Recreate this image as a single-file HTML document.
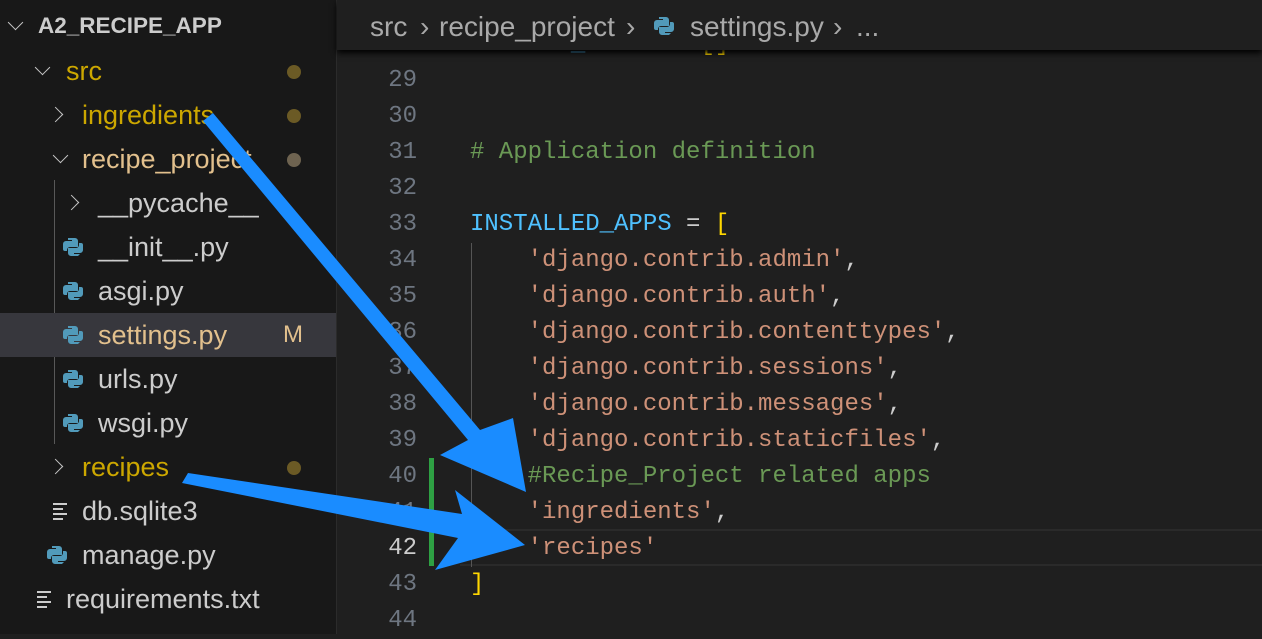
<!DOCTYPE html>
<html><head><meta charset="utf-8"><style>
*{margin:0;padding:0;box-sizing:border-box}
body{width:1262px;height:634px;overflow:hidden;background:#1f1f1f;position:relative;font-family:"Liberation Sans",sans-serif}
#side{position:absolute;left:0;top:0;width:337px;height:634px;background:#181818;border-right:1px solid #2b2b2b}
.r{position:absolute;left:0;width:336px;height:44px;line-height:44px;font-size:27px;color:#cccccc;white-space:nowrap}
.r span{position:absolute}
.chev{position:absolute;width:11px;height:11px;border-right:1.5px solid #c5c5c5;border-bottom:1.5px solid #c5c5c5}
.dn{transform:rotate(45deg)}
.rt{transform:rotate(-45deg)}
.dot{position:absolute;left:287px;top:16px;width:14px;height:14px;border-radius:50%;background:#6b5a25}
.py{position:absolute;top:11px}
.guide{position:absolute;left:54px;top:180px;width:1px;height:264px;background:#585858}
#hdr{position:absolute;left:337px;top:0;width:925px;height:50px;background:#1f1f1f;box-shadow:0 3px 6px #000;z-index:2;font-size:28px;color:#a9a9a9;line-height:54px}
.ln{position:absolute;left:337px;width:80px;text-align:right;font-family:"Liberation Mono",monospace;font-size:24px;color:#6e7681;height:36px;line-height:36px}
.cd{position:absolute;left:470px;font-family:"Liberation Mono",monospace;font-size:24px;height:36px;line-height:36px;white-space:pre;color:#cccccc}
.s{color:#ce9178}.c{color:#6a9955}.v{color:#4fc1ff}.b{color:#ffd700}
</style></head><body>
<div id="side">
<div class="r" style="top:4px"><i class="chev dn" style="left:10px;top:13px"></i><span style="left:38px;font-weight:bold;color:#cccccc;font-size:22.5px">A2_RECIPE_APP</span></div>
<div class="r" style="top:49px;color:#cca700"><i class="chev dn" style="left:37px;top:13px"></i><span style="left:66px">src</span><i class="dot"></i></div>
<div class="r" style="top:93px;color:#cca700"><i class="chev rt" style="left:50px;top:16px"></i><span style="left:82px">ingredients</span><i class="dot"></i></div>
<div class="r" style="top:137px;color:#e2c08d"><i class="chev dn" style="left:55px;top:13px"></i><span style="left:82px">recipe_project</span><i class="dot" style="background:#6e6350"></i></div>
<div class="guide"></div>
<div class="r" style="top:181px"><i class="chev rt" style="left:66px;top:16px"></i><span style="left:98px">__pycache__</span></div>
<div class="r" style="top:225px"><svg class="py" style="left:62px" width="22" height="22" viewBox="0 0 22 22"><path d="M6 2h7a3 3 0 013 3v6H8a3 3 0 00-3 3v1H3a2 2 0 01-2-2V8a3 3 0 013-3h6V4H6z" fill="#519aba"/><path d="M16 20H9a3 3 0 01-3-3v-5h8a3 3 0 003-3V7h2a2 2 0 012 2v5a3 3 0 01-3 3h-6v1h6z" fill="#519aba"/></svg><span style="left:98px">__init__.py</span></div>
<div class="r" style="top:269px"><svg class="py" style="left:62px" width="22" height="22" viewBox="0 0 22 22"><path d="M6 2h7a3 3 0 013 3v6H8a3 3 0 00-3 3v1H3a2 2 0 01-2-2V8a3 3 0 013-3h6V4H6z" fill="#519aba"/><path d="M16 20H9a3 3 0 01-3-3v-5h8a3 3 0 003-3V7h2a2 2 0 012 2v5a3 3 0 01-3 3h-6v1h6z" fill="#519aba"/></svg><span style="left:98px">asgi.py</span></div>
<div class="r" style="top:313px;background:#37373d;color:#e2c08d"><svg class="py" style="left:62px" width="22" height="22" viewBox="0 0 22 22"><path d="M6 2h7a3 3 0 013 3v6H8a3 3 0 00-3 3v1H3a2 2 0 01-2-2V8a3 3 0 013-3h6V4H6z" fill="#519aba"/><path d="M16 20H9a3 3 0 01-3-3v-5h8a3 3 0 003-3V7h2a2 2 0 012 2v5a3 3 0 01-3 3h-6v1h6z" fill="#519aba"/></svg><span style="left:98px">settings.py</span><span style="left:283px;font-size:24px">M</span></div>
<div class="r" style="top:357px"><svg class="py" style="left:62px" width="22" height="22" viewBox="0 0 22 22"><path d="M6 2h7a3 3 0 013 3v6H8a3 3 0 00-3 3v1H3a2 2 0 01-2-2V8a3 3 0 013-3h6V4H6z" fill="#519aba"/><path d="M16 20H9a3 3 0 01-3-3v-5h8a3 3 0 003-3V7h2a2 2 0 012 2v5a3 3 0 01-3 3h-6v1h6z" fill="#519aba"/></svg><span style="left:98px">urls.py</span></div>
<div class="r" style="top:401px"><svg class="py" style="left:62px" width="22" height="22" viewBox="0 0 22 22"><path d="M6 2h7a3 3 0 013 3v6H8a3 3 0 00-3 3v1H3a2 2 0 01-2-2V8a3 3 0 013-3h6V4H6z" fill="#519aba"/><path d="M16 20H9a3 3 0 01-3-3v-5h8a3 3 0 003-3V7h2a2 2 0 012 2v5a3 3 0 01-3 3h-6v1h6z" fill="#519aba"/></svg><span style="left:98px">wsgi.py</span></div>
<div class="r" style="top:445px;color:#cca700"><i class="chev rt" style="left:50px;top:16px"></i><span style="left:82px">recipes</span><i class="dot"></i></div>
<div class="r" style="top:489px"><svg style="position:absolute;left:52px;top:13px" width="18" height="18"><path d="M1 2h14M1 7h10M1 12h14M1 17h10" stroke="#ccc" stroke-width="2"/></svg><span style="left:82px">db.sqlite3</span></div>
<div class="r" style="top:533px"><svg class="py" style="left:46px" width="22" height="22" viewBox="0 0 22 22"><path d="M6 2h7a3 3 0 013 3v6H8a3 3 0 00-3 3v1H3a2 2 0 01-2-2V8a3 3 0 013-3h6V4H6z" fill="#519aba"/><path d="M16 20H9a3 3 0 01-3-3v-5h8a3 3 0 003-3V7h2a2 2 0 012 2v5a3 3 0 01-3 3h-6v1h6z" fill="#519aba"/></svg><span style="left:82px">manage.py</span></div>
<div class="r" style="top:577px"><svg style="position:absolute;left:36px;top:13px" width="18" height="18"><path d="M1 2h14M1 7h10M1 12h14M1 17h10" stroke="#ccc" stroke-width="2"/></svg><span style="left:66px">requirements.txt</span></div>
</div>

<div id="hdr"><span style="position:absolute;left:33px">src</span><span style="position:absolute;left:83px">›</span><span style="position:absolute;left:102px">recipe_project</span><span style="position:absolute;left:289px">›</span>
<svg style="position:absolute;left:316px;top:15px" width="22" height="22" viewBox="0 0 22 22"><path d="M6 2h7a3 3 0 013 3v6H8a3 3 0 00-3 3v1H3a2 2 0 01-2-2V8a3 3 0 013-3h6V4H6z" fill="#519aba"/><path d="M16 20H9a3 3 0 01-3-3v-5h8a3 3 0 003-3V7h2a2 2 0 012 2v5a3 3 0 01-3 3h-6v1h6z" fill="#519aba"/></svg>
<span style="position:absolute;left:353px">settings.py</span><span style="position:absolute;left:496px">›</span><span style="position:absolute;left:519px">...</span></div>

<div class="ln" style="top:27px">28</div><div class="cd v" style="top:27px">ALLOWED_HOSTS <span style="color:#ccc">=</span> <span class="b">[]</span></div>
<div class="ln" style="top:63px">29</div>
<div class="ln" style="top:99px">30</div>
<div class="ln" style="top:135px">31</div><div class="cd c" style="top:135px"># Application definition</div>
<div class="ln" style="top:171px">32</div>
<div class="ln" style="top:207px">33</div><div class="cd" style="top:207px"><span class="v">INSTALLED_APPS</span> = <span class="b">[</span></div>
<div class="ln" style="top:243px">34</div><div class="cd" style="top:243px">    <span class="s">'django.contrib.admin'</span>,</div>
<div class="ln" style="top:279px">35</div><div class="cd" style="top:279px">    <span class="s">'django.contrib.auth'</span>,</div>
<div class="ln" style="top:315px">36</div><div class="cd" style="top:315px">    <span class="s">'django.contrib.contenttypes'</span>,</div>
<div class="ln" style="top:351px">37</div><div class="cd" style="top:351px">    <span class="s">'django.contrib.sessions'</span>,</div>
<div class="ln" style="top:387px">38</div><div class="cd" style="top:387px">    <span class="s">'django.contrib.messages'</span>,</div>
<div class="ln" style="top:423px">39</div><div class="cd" style="top:423px">    <span class="s">'django.contrib.staticfiles'</span>,</div>
<div class="ln" style="top:459px">40</div><div class="cd c" style="top:459px">    #Recipe_Project related apps</div>
<div class="ln" style="top:495px">41</div><div class="cd" style="top:495px">    <span class="s">'ingredients'</span>,</div>
<div style="position:absolute;left:460px;top:529px;width:802px;height:37px;border-top:2px solid #2a2a2a;border-bottom:2px solid #2a2a2a"></div>
<div class="ln" style="top:531px;color:#cccccc">42</div><div class="cd" style="top:531px">    <span class="s">'recipes'</span></div>
<div class="ln" style="top:567px">43</div><div class="cd b" style="top:567px">]</div>
<div class="ln" style="top:603px">44</div>
<div style="position:absolute;left:471px;top:243px;width:1px;height:324px;background:#555"></div>
<div style="position:absolute;left:429px;top:458px;width:5px;height:108px;background:#2ea043"></div>

<svg style="position:absolute;left:0;top:0;z-index:3" width="1262" height="634">
<polygon points="203,121 213,113 480,430 513,418 526,492 440,455 468,440" fill="#1a8cff"/>
<polygon points="182,483 188,473 462,514 455,490 525,545 435,570 458,538" fill="#1a8cff"/>
</svg>
</body></html>
